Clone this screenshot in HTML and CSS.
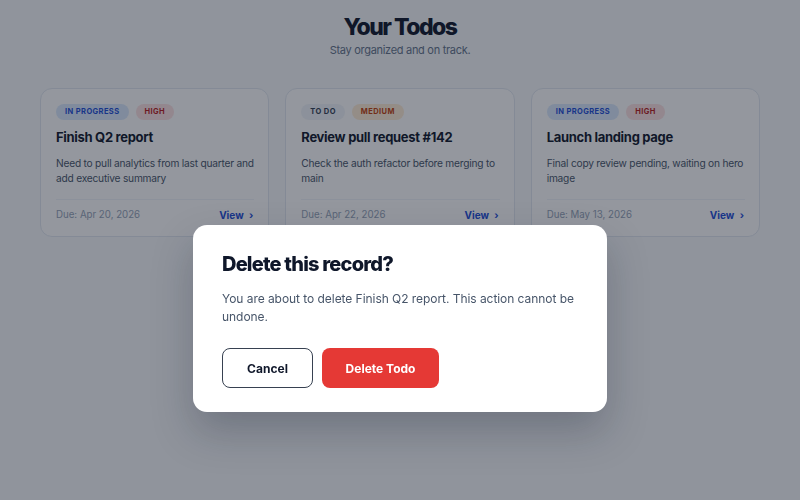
FILE: index.html
```html
<!DOCTYPE html>
<html lang="en">
<head>
    <meta charset="UTF-8">
    <meta name="viewport" content="width=device-width, initial-scale=1.0">
    <title>Your Todos</title>
    <link rel="stylesheet" href="styles.css">
</head>
<body>
    <div class="page">
        <h1>Your Todos</h1>
        <p class="subtitle">Stay organized and on track.</p>

        <div class="cards">
            <div class="card">
                <div class="badges">
                    <span class="badge progress">In progress</span>
                    <span class="badge high">High</span>
                </div>
                <h2>Finish Q2 report</h2>
                <p class="desc">Need to pull analytics from last quarter and add executive summary</p>
                <div class="card_footer">
                    <span class="due">Due: Apr 20, 2026</span>
                    <a class="view" href="#">View <span class="chev">&#8250;</span></a>
                </div>
            </div>

            <div class="card">
                <div class="badges">
                    <span class="badge todo">To do</span>
                    <span class="badge medium">Medium</span>
                </div>
                <h2>Review pull request #142</h2>
                <p class="desc">Check the auth refactor before merging to main</p>
                <div class="card_footer">
                    <span class="due">Due: Apr 22, 2026</span>
                    <a class="view" href="#">View <span class="chev">&#8250;</span></a>
                </div>
            </div>

            <div class="card">
                <div class="badges">
                    <span class="badge progress">In progress</span>
                    <span class="badge high">High</span>
                </div>
                <h2>Launch landing page</h2>
                <p class="desc">Final copy review pending, waiting on hero image</p>
                <div class="card_footer">
                    <span class="due">Due: May 13, 2026</span>
                    <a class="view" href="#">View <span class="chev">&#8250;</span></a>
                </div>
            </div>
        </div>
    </div>

    <div class="overlay">
        <div class="modal">
            <h3>Delete this record?</h3>
            <p>You are about to delete Finish Q2 report. This action cannot be undone.</p>
            <div class="actions">
                <button class="cancel">Cancel</button>
                <button class="delete">Delete Todo</button>
            </div>
        </div>
    </div>
</body>
</html>
```

FILE: styles.css
```css
*{
    margin: 0;
    padding: 0;
    box-sizing: border-box;
}
body{
    background-color: #f8fafc;
    font-family: Inter, "Noto Sans", sans-serif;
    color: #0f172a;
}
.page{
    max-width: 720px;
    margin: 0 auto;
    padding-top: 13px;
    text-align: center;
}
.page h1{
    font-size: 23px;
    line-height: 28px;
    font-weight: 800;
    letter-spacing: -1.5px;
}
.subtitle{
    font-size: 11px;
    line-height: 18px;
    letter-spacing: -0.3px;
    color: #64748b;
}

.cards{
    display: grid;
    grid-template-columns: 1fr 1fr 1fr;
    gap: 16px;
    margin-top: 29px;
    text-align: left;
}
.card{
    background-color: #ffffff;
    border: 1px solid #e2e8f0;
    border-radius: 12px;
    padding: 15px 14px 13px 15px;
}
.badges{
    display: flex;
    gap: 7px;
}
.badge{
    font-size: 7.5px;
    line-height: 16px;
    font-weight: 700;
    text-transform: uppercase;
    letter-spacing: 0.4px;
    padding: 0 9px;
    border-radius: 999px;
}
.progress{
    background-color: #dbeafe;
    color: #1d4ed8;
}
.high{
    background-color: #fee2e2;
    color: #b91c1c;
}
.todo{
    background-color: #f1f5f9;
    color: #334155;
}
.medium{
    background-color: #ffedd5;
    color: #c2410c;
}
.card h2{
    font-size: 13px;
    line-height: 20px;
    font-weight: 700;
    margin-top: 7px;
    letter-spacing: -0.3px;
}
.desc{
    font-size: 10.2px;
    line-height: 15px;
    letter-spacing: -0.22px;
    color: #475569;
    margin-top: 9px;
    min-height: 30px;
}
.card_footer{
    display: flex;
    justify-content: space-between;
    align-items: center;
    border-top: 1px solid #f1f5f9;
    margin-top: 13px;
    padding-top: 7px;
}
.due{
    font-size: 9.7px;
    line-height: 16px;
    color: #94a3b8;
}
.view{
    font-size: 10px;
    line-height: 16px;
    font-weight: 700;
    color: #1d4ed8;
    text-decoration: none;
    margin-right: 1px;
}
.chev{
    font-weight: 700;
    margin-left: 3px;
}

.overlay{
    position: fixed;
    inset: 0;
    background-color: rgba(17, 24, 39, 0.45);
    display: flex;
    justify-content: center;
    align-items: flex-start;
    padding-top: 225px;
}
.modal{
    width: 414px;
    background-color: #ffffff;
    border-radius: 14px;
    padding: 24px 29px 24px;
    box-shadow: 0 20px 40px rgba(15, 23, 42, 0.25);
}
.modal h3{
    font-size: 20px;
    line-height: 30px;
    font-weight: 800;
    letter-spacing: -0.8px;
}
.modal p{
    font-size: 12px;
    line-height: 18px;
    letter-spacing: -0.05px;
    color: #475569;
    margin-top: 11px;
}
.actions{
    display: flex;
    gap: 9px;
    margin-top: 22px;
}
.actions button{
    height: 40px;
    border-radius: 8px;
    font-family: Inter, "Noto Sans", sans-serif;
    font-size: 12px;
    font-weight: 700;
}
.cancel{
    width: 91px;
    background-color: #ffffff;
    border: 1px solid #374151;
    color: #0f172a;
}
.delete{
    width: 117px;
    background-color: #e53935;
    border: none;
    color: #ffffff;
}
```
